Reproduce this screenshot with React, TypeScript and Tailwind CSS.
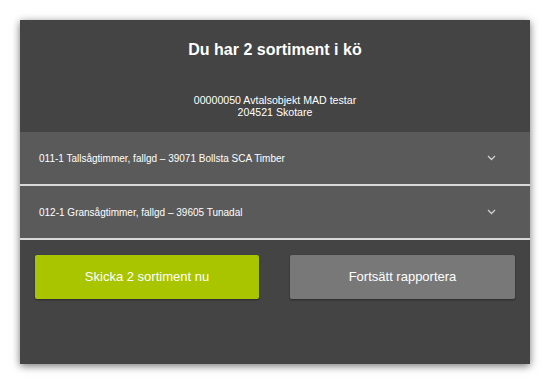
import React from 'react';

const rows = [
  '011-1 Tallsågtimmer, fallgd – 39071 Bollsta SCA Timber',
  '012-1 Gransågtimmer, fallgd – 39605 Tunadal',
];

const Chevron = () => (
  <svg width="9" height="6" viewBox="0 0 9 6" fill="none" className="text-[#cfcfcf]">
    <path d="M1 1l3.5 3.5L8 1" stroke="currentColor" strokeWidth="1.3" />
  </svg>
);

export default function App() {
  return (
    <div
      className="w-[552px] h-[384px] bg-white pt-[20px] pl-[20px]"
      style={{ fontFamily: '"Liberation Sans", Arial, sans-serif' }}
    >
      <div className="w-[510px] h-[344px] bg-[#444444] shadow-[0_2px_8px_rgba(0,0,0,0.55)] flex flex-col">
        {/* Header */}
        <div className="h-[112px] flex flex-col items-center pt-[21px] text-white">
          <h1 className="text-[16px] leading-[18px] font-bold">Du har 2 sortiment i kö</h1>
          <div className="mt-[35px] text-[10.6px] leading-[12px] text-center">
            <p>00000050 Avtalsobjekt MAD testar</p>
            <p>204521 Skotare</p>
          </div>
        </div>

        {/* Rows */}
        {rows.map((r) => (
          <div
            key={r}
            className="h-[54px] bg-[#5a5a5a] border-b-2 border-[#d9d9d9] flex items-center justify-between pl-[19px] pr-[34px]"
          >
            <span className="text-[10px] text-white">{r}</span>
            <Chevron />
          </div>
        ))}

        {/* Buttons */}
        <div className="mt-[15px] px-[15px] flex gap-[31px]">
          <button className="w-[224px] h-[44px] bg-[#a8c500] rounded-[2px] text-white text-[13px] shadow-[0_1px_2px_rgba(0,0,0,0.4)]">
            Skicka 2 sortiment nu
          </button>
          <button className="w-[225px] h-[44px] bg-[#787878] rounded-[2px] text-white text-[13px] shadow-[0_1px_2px_rgba(0,0,0,0.4)]">
            Fortsätt rapportera
          </button>
        </div>
      </div>
    </div>
  );
}
